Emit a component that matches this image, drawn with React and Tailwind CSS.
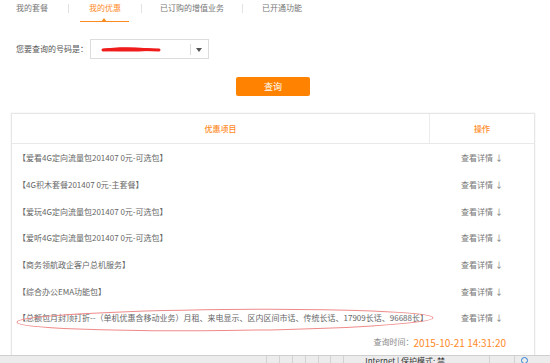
import React from 'react';

const tabs = [
  { label: '我的套餐', width: 'w-[68px]', pad: 'pl-[16px]' },
  { label: '我的优惠', width: 'w-[72px]', active: true },
  { label: '已订购的增值业务', width: 'w-[100px]' },
  { label: '已开通功能', width: 'w-[80px]', pad: 'pl-[19px]' },
];

const offers = [
  '【爱看4G定向流量包201407 0元-可选包】',
  '【4G积木套餐201407 0元-主套餐】',
  '【爱玩4G定向流量包201407 0元-可选包】',
  '【爱听4G定向流量包201407 0元-可选包】',
  '【商务领航政企客户总机服务】',
  '【综合办公EMA功能包】',
  '【总额包月封顶打折--（单机优惠含移动业务）月租、来电显示、区内区间市话、传统长话、17909长话、96688长】',
];

function Tabs() {
  return (
    <div className="flex h-[23px] items-start">
      {tabs.map((t, i) => (
        <React.Fragment key={t.label}>
          {i > 0 && <div className="mt-[4px] h-[9px] w-px bg-[#e2e2e2]" />}
          <div className={`${t.width} relative h-[23px] ${t.pad ? t.pad + ' text-left' : 'text-center'}`}>
            <span className={`block pt-[2px] leading-[12px] ${t.active ? 'text-[#ff8a1f]' : 'text-[#777]'}`}>
              {t.label}
            </span>
            {t.active && (
              <>
                <div className="absolute left-[11px] top-[21px] h-px w-[49px] bg-[#ff8a1f]" />
                <div className="absolute left-[32px] top-[18px] h-0 w-0 border-x-[3.5px] border-b-[4px] border-x-transparent border-b-[#ff8a1f]" />
              </>
            )}
          </div>
        </React.Fragment>
      ))}
    </div>
  );
}

function NumberSelect() {
  return (
    <div className="mt-[16px] flex items-center pl-[16px]">
      <span className="w-[74px] text-[#555]">您要查询的号码是：</span>
      <div className="relative flex h-[20px] w-[119px] items-center border border-[#dcdcdc] bg-white">
        <svg className="absolute left-[9px] top-[6px]" width="62" height="8" viewBox="0 0 62 8">
          <path d="M2 3 C14 1, 30 1, 44 2 C52 2.5, 57 3.5, 60 4 C50 5.5, 30 6, 4 5 Z" fill="#f01c1c" />
          <path d="M3 4 C20 3, 40 3, 59 4" stroke="#f01c1c" strokeWidth="3" strokeLinecap="round" fill="none" />
        </svg>
        <div className="ml-auto mr-[17px] h-[11px] w-px bg-[#ddd]" />
        <div className="absolute right-[6px] top-[8px] h-0 w-0 border-x-[3.5px] border-t-[4px] border-x-transparent border-t-[#555]" />
      </div>
    </div>
  );
}

export default function App() {
  return (
    <div
      className="relative h-[363px] w-[550px] overflow-hidden bg-white text-[8px] text-[#666]"
      style={{ fontFamily: '"Noto Sans CJK SC", "Noto Sans", sans-serif' }}
    >
      <Tabs />
      <NumberSelect />

      <div className="mt-[18px] flex pl-[236px]">
        <button className="h-[19px] w-[74px] rounded-[2px] bg-[#ff8300] text-[9px] text-white">查询</button>
      </div>

      <div className="mx-[11px] mt-[17px] h-[243px] w-[524px] border border-[#e6e6e6] shadow-[0_0_1px_#ddd]">
        <div className="flex h-[30px] border-b border-[#e9e9e9] font-medium text-[#ff8a1f]">
          <div className="flex flex-1 items-center justify-center border-r border-[#ececec]">优惠项目</div>
          <div className="flex w-[104px] items-center justify-center">操作</div>
        </div>
        <div className="pt-[1px]">
          {offers.map((o) => (
            <div key={o} className="flex h-[26.7px] items-center">
              <div className="flex-1 truncate pl-[6px]">{o}</div>
              <div className="w-[104px] text-center text-[#777]">查看详情 ↓</div>
            </div>
          ))}
        </div>
        <div className="flex h-[21px] items-center justify-end pr-[28px]">
          <span className="text-[#888]">查询时间：</span>
          <span className="text-[10px] text-[#ff8a1f]">2015-10-21 14:31:20</span>
        </div>
      </div>

      <svg className="pointer-events-none absolute left-0 top-0" width="550" height="363">
        <ellipse cx="225" cy="320" rx="208" ry="10.5" fill="none" stroke="#ef8a8a" strokeWidth="1" transform="rotate(-0.6 225 320)" />
      </svg>

      <div className="absolute bottom-0 left-0 flex h-[8px] w-full items-start border-t border-[#cfcfcf] bg-[#ececec] text-[8px] leading-[10px] text-[#333]">
        <div className="w-[267px]" />
        {[0, 1, 2, 3, 4, 5].map((i) => (
          <div key={i} className="h-full w-[13px] border-l border-[#d2d2d2]" />
        ))}
        <div className="flex items-center gap-[2px] border-l border-[#d2d2d2] pl-[12px]">
          <span className="inline-block h-[7px] w-[7px] rounded-full border border-[#2a7fd4] bg-[#7cc0f0]" />
          <span>Internet | 保护模式: 禁用</span>
        </div>
        <div className="ml-[36px] h-full border-l border-[#d2d2d2] pl-[24px]" />
        <div className="h-full border-l border-[#d2d2d2] pl-[6px]">
          <span className="inline-block h-[7px] w-[7px] rounded-full border border-[#2a7fd4]" /> 100%
        </div>
      </div>
    </div>
  );
}
